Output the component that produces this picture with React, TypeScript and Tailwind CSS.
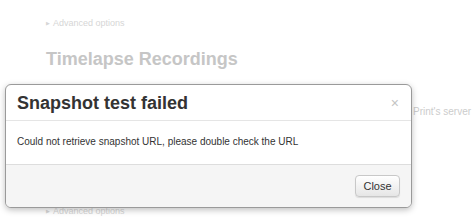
export default function App() {
  return (
    <div
      className="relative w-[474px] h-[219px] overflow-hidden bg-white"
      style={{ fontFamily: '"Liberation Sans", Arial, sans-serif' }}
    >
      {/* faded page behind the backdrop */}
      <div className="pl-[46px] pt-[17px] text-[#cfcfcf]">
        <div className="flex items-center gap-[3px] text-[9px] text-[#d6d6d6]">
          <span className="text-[5px]">▶</span>
          <span>Advanced options</span>
        </div>
        <h2 className="mt-[17px] text-[18px] font-bold text-[#c6c6c6] leading-[22px]">Timelapse Recordings</h2>
        <div className="ml-[129px] mt-[15px] w-[220px] h-[2px] bg-[#eeeeee]" />
      </div>
      <div className="absolute left-[413px] top-[104px] whitespace-nowrap text-[10px] text-[#cccccc]">Print's server</div>
      <div className="absolute left-[46px] top-[205px] flex items-center gap-[3px] text-[9px] text-[#d6d6d6]">
        <span className="text-[5px]">▶</span>
        <span>Advanced options</span>
      </div>

      {/* modal */}
      <div className="absolute left-[5px] top-[84px] w-[407px] h-[124px] flex flex-col bg-white border border-[#9a9a9a] rounded-[6px] shadow-[0_2px_6px_rgba(0,0,0,0.25)] overflow-hidden">
        <div className="flex items-center justify-between h-[36px] pl-[11px] pr-[12px] border-b border-[#e5e5e5]">
          <h3 className="text-[18px] font-bold text-[#333333] leading-none">Snapshot test failed</h3>
          <span className="text-[14px] text-[#c4c4c4] leading-none">×</span>
        </div>
        <div className="flex-1 pl-[11px] pt-[13px] text-[10px] text-[#333333]">
          Could not retrieve snapshot URL, please double check the URL
        </div>
        <div className="h-[43px] flex items-center justify-end pr-[11px] bg-[#f5f5f5] border-t border-[#dddddd]">
          <button className="h-[22px] w-[45px] text-[11px] text-[#333333] rounded-[4px] border border-[#c8c8c8] bg-gradient-to-b from-white to-[#e6e6e6] shadow-[0_1px_1px_rgba(0,0,0,0.1)]">
            Close
          </button>
        </div>
      </div>
    </div>
  );
}
